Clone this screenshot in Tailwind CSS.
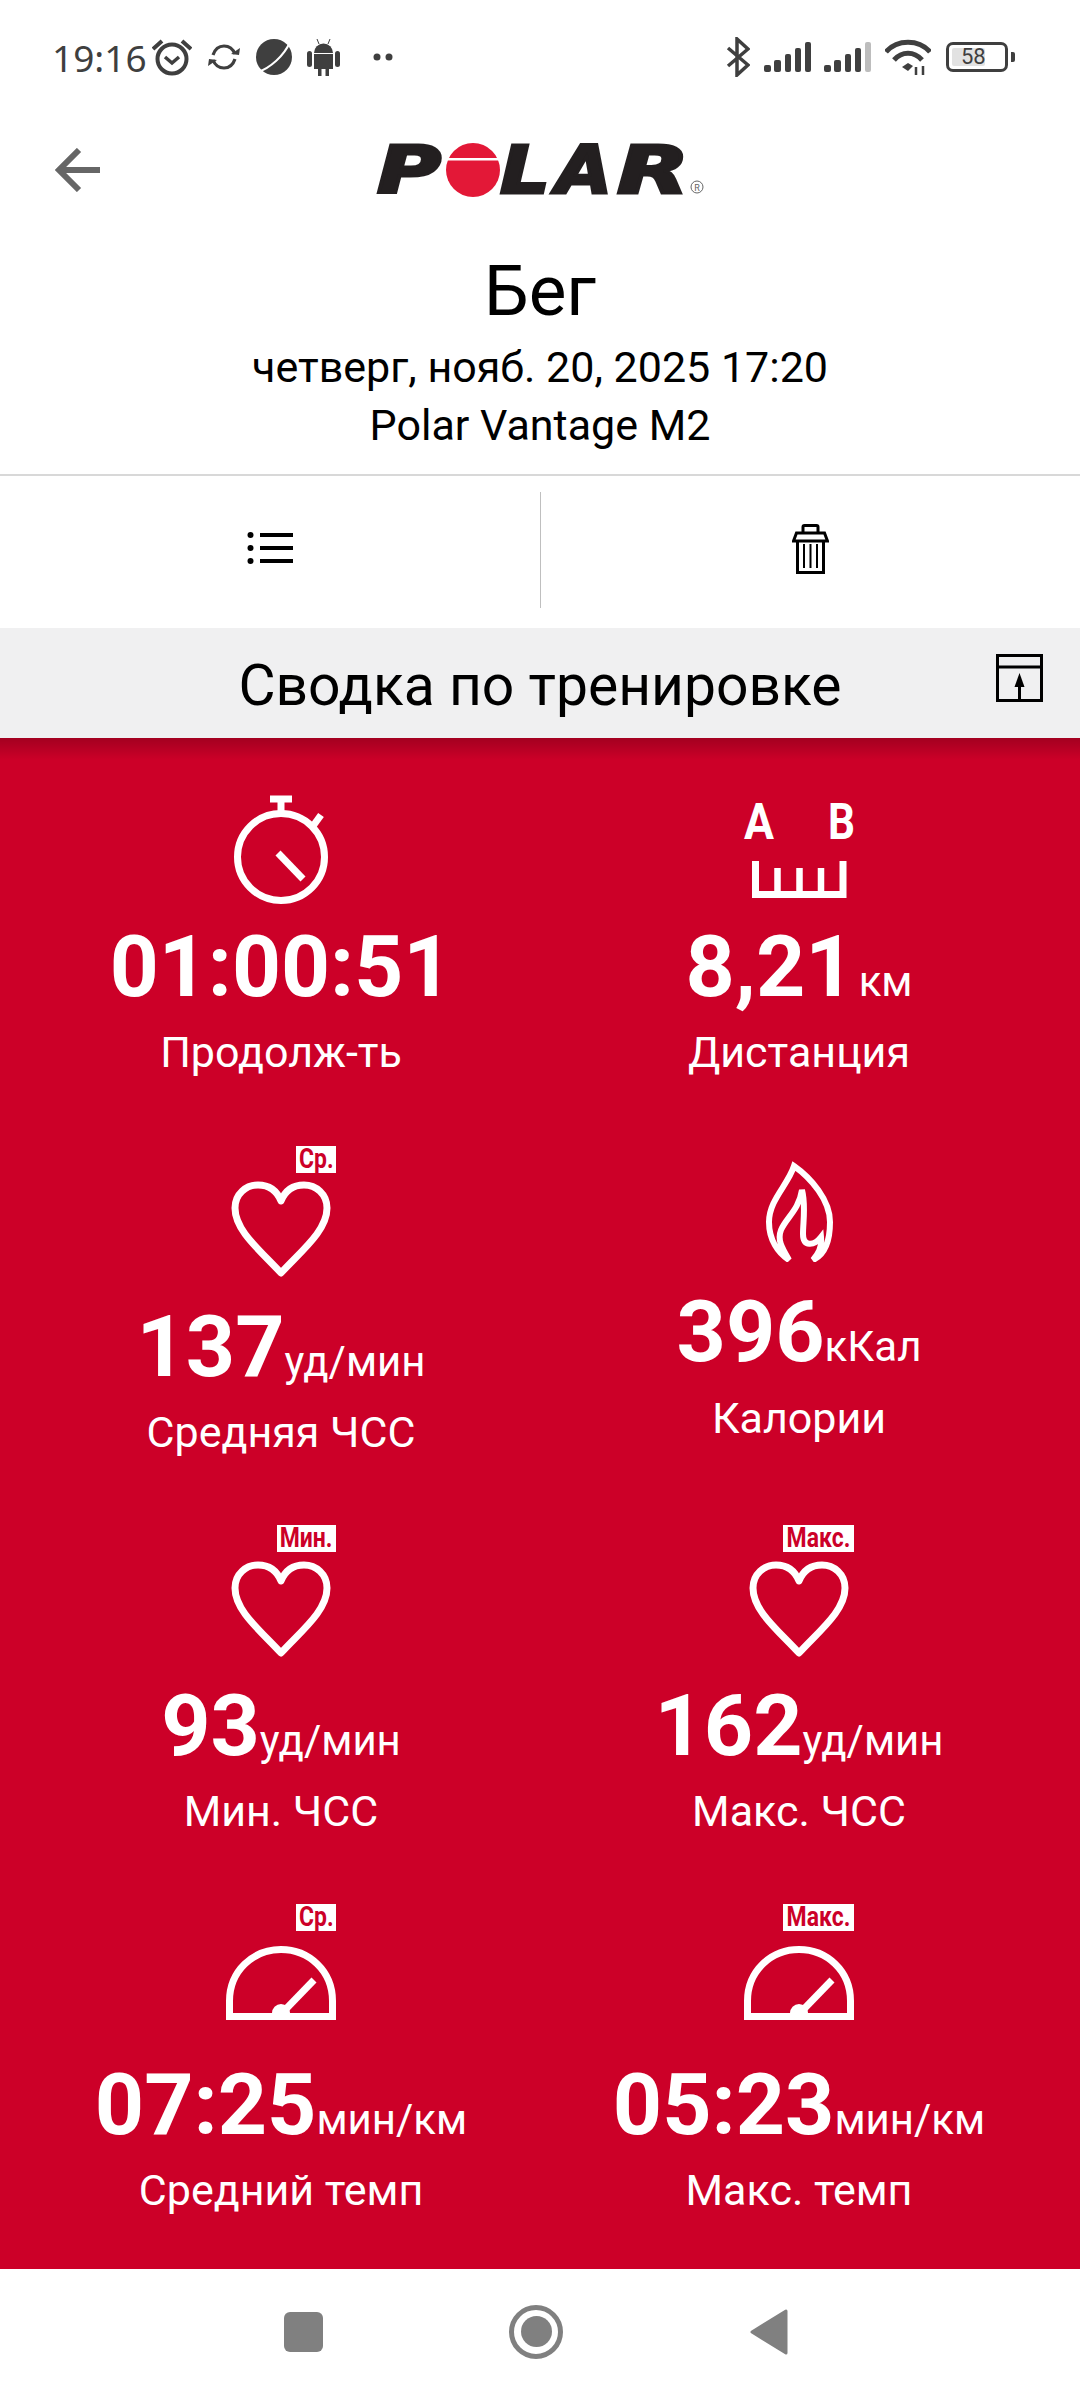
<!DOCTYPE html>
<html lang="ru">

<head>
    <meta charset="UTF-8">
    <meta name="viewport" content="width=device-width, initial-scale=1.0">
    <script src="https://cdn.jsdelivr.net/npm/@tailwindcss/browser@4"></script>
    <title>Polar</title>
</head>

<body class="bg-white font-['Roboto',sans-serif] text-black">
    <svg class="hidden">
        <symbol id="heart" viewBox="0 0 100 97">
            <path d="M50 92C30 70 4 50 4 27 4 13 15 4 27 4 38 4 46 10 50 20 54 10 62 4 73 4 85 4 96 13 96 27 96 50 70 70 50 92Z" fill="none" stroke="#fff" stroke-width="7" stroke-linejoin="round" />
        </symbol>
        <symbol id="gauge" viewBox="0 0 110 74">
            <path d="M3.500 70.500V55C3.500 25 27 3.500 55 3.500S106.500 25 106.500 55V70.500Z" fill="none" stroke="#fff" stroke-width="7" />
            <path d="M57 66L88 34" stroke="#fff" stroke-width="7" />
            <path d="M46 67A9 9 0 0 1 64 67Z" fill="#fff" />
        </symbol>
    </svg>

    <div class="flex h-[2400px] w-[1080px] flex-col overflow-hidden">
        <!-- status bar -->
        <div class="flex h-[114px] shrink-0 items-center pl-[52px] pr-[65px] text-[#3f3f3f]">
            <span class="w-[93px] font-['Noto_Sans',sans-serif] text-[37px] leading-none">19:16</span>
            <svg class="ml-[7px]" width="40" height="38" viewBox="0 0 40 38" fill="none" stroke="#3f3f3f">
                <circle cx="20" cy="21" r="14.500" stroke-width="4" />
                <path d="M13 19l7 6 7-6" stroke-width="3.500" />
                <path d="M1 11L10 3M39 11L30 3" stroke-width="4" />
            </svg>
            <svg class="ml-[16px]" width="32" height="28" viewBox="0 0 32 28" fill="none" stroke="#3f3f3f" stroke-width="3.200">
                <path d="M5 12C7 6 11 3 16 3c5 0 9 3 11 8" />
                <path d="M27 16c-2 6-6 9-11 9-5 0-9-3-11-8" />
                <path d="M23 11l8 1 1-7z" fill="#3f3f3f" stroke="none" />
                <path d="M9 17l-8-1-1 7z" fill="#3f3f3f" stroke="none" />
            </svg>
            <svg class="ml-[16px]" width="36" height="36" viewBox="0 0 36 36">
                <circle cx="18" cy="18" r="18" fill="#3f3f3f" />
                <path d="M2 33C14 29 28 17 34 3" fill="none" stroke="#fff" stroke-width="2" />
            </svg>
            <svg class="ml-[15px]" width="33" height="37" viewBox="0 0 33 37" fill="#3f3f3f">
                <path d="M7 14a9.500 9.500 0 0 1 19 0z" />
                <path d="M7 15h19v15h-4v7h-3.500v-7h-4v7H11v-7H7z" />
                <rect x="0" y="12" width="5" height="16" rx="2.500" />
                <rect x="28" y="12" width="5" height="16" rx="2.500" />
                <path d="M10 0l2 5M23 0l-2 5" stroke="#3f3f3f" stroke-width="1" />
            </svg>
            <svg class="ml-[33px]" width="20" height="8" viewBox="0 0 20 8" fill="#3f3f3f">
                <circle cx="4" cy="4" r="3.500" />
                <circle cx="16" cy="4" r="3.500" />
            </svg>

            <svg class="ml-auto" width="24" height="40" viewBox="0 0 24 40" fill="none" stroke="#3f3f3f" stroke-width="3.500">
                <path d="M2 11L22 28 11 38V2L22 12 2 29" />
            </svg>
            <svg class="ml-[14px]" width="48" height="30" viewBox="0 0 48 30" fill="#3f3f3f">
                <rect x="0" y="23" width="7" height="7" rx="2" />
                <rect x="10" y="18" width="7" height="12" rx="2" />
                <rect x="21" y="12" width="6" height="18" rx="2" />
                <rect x="31" y="6" width="6" height="24" rx="2" />
                <rect x="41" y="0" width="6" height="30" rx="2" />
            </svg>
            <svg class="ml-[12px]" width="48" height="30" viewBox="0 0 48 30" fill="#3f3f3f">
                <rect x="0" y="23" width="7" height="7" rx="2" />
                <rect x="10" y="18" width="7" height="12" rx="2" />
                <rect x="21" y="12" width="6" height="18" rx="2" />
                <rect x="31" y="6" width="6" height="24" rx="2" />
                <rect x="41" y="0" width="6" height="30" rx="2" fill="#bdbdbd" />
            </svg>
            <svg class="ml-[13px]" width="46" height="36" viewBox="0 0 46 36" fill="none" stroke="#3f3f3f" stroke-width="5">
                <path d="M1 13C12 0 34 0 45 13" />
                <path d="M9 21C17 12 29 12 37 21" />
                <path d="M17 28l6-4 5 3-5 5z" fill="#3f3f3f" stroke="none" />
                <path d="M31 28v8M38 27v9" stroke-width="2.500" />
            </svg>
            <div class="ml-[15px] flex items-center">
                <div class="flex h-[30px] w-[62px] items-center rounded-[7px] border-[3px] border-[#3f3f3f] p-[3px]">
                    <div class="flex h-full w-[33px] items-center rounded-[2px] bg-[#e2e2e2]">
                        <span class="ml-[9px] text-[22px] leading-none text-[#3f3f3f]">58</span>
                    </div>
                </div>
                <div class="ml-[3px] h-[10px] w-[4px] rounded-r-[2px] bg-[#3f3f3f]"></div>
            </div>
        </div>

        <!-- header -->
        <div class="grid h-[112px] shrink-0 grid-cols-[1fr_328px_1fr] items-center">
            <svg class="ml-[55px]" width="45" height="44" viewBox="0 0 45 44" fill="none" stroke="#666" stroke-width="6">
                <path d="M45 22H4M24 2L4 22l20 20" />
            </svg>
            <svg class="mt-[8px] overflow-visible" width="328" height="60" viewBox="0 0 328 60">
                <g font-family="DejaVu Sans" font-weight="700" font-style="italic" font-size="66" fill="#231f20" stroke="#231f20" stroke-width="3">
                    <text x="1" y="49" textLength="64" lengthAdjust="spacingAndGlyphs">P</text>
                    <text x="124" y="49" textLength="50" lengthAdjust="spacingAndGlyphs">L</text>
                    <text x="180" y="49" textLength="56" lengthAdjust="spacingAndGlyphs">A</text>
                    <text x="241" y="49" textLength="72" lengthAdjust="spacingAndGlyphs">R</text>
                </g>
                <circle cx="97" cy="26" r="27" fill="#e31837" />
                <rect x="70" y="14" width="54" height="2.500" fill="#fff" />
                <circle cx="321" cy="43" r="6" fill="none" stroke="#666" stroke-width="1" />
                <text x="321" y="46.500" text-anchor="middle" font-family="Roboto" font-size="9" fill="#666">R</text>
            </svg>
        </div>

        <!-- title -->
        <div class="flex h-[250px] shrink-0 flex-col items-center border-b-2 border-[#d8d8d8] pt-[24px]">
            <div class="text-[71px] leading-[82px]">Бег</div>
            <div class="mt-[6px] text-[43px] leading-[58px]">четверг, нояб. 20, 2025 17:20</div>
            <div class="text-[43px] leading-[58px]">Polar Vantage M2</div>
        </div>

        <!-- actions -->
        <div class="flex h-[152px] shrink-0 items-center">
            <div class="flex flex-1 justify-center pb-[8px]">
                <svg width="46" height="32" viewBox="0 0 46 32" fill="#000">
                    <circle cx="3.500" cy="3" r="3" />
                    <circle cx="3.500" cy="16" r="3" />
                    <circle cx="3.500" cy="29" r="3" />
                    <rect x="13" y="1" width="33" height="4" />
                    <rect x="13" y="14" width="33" height="4" />
                    <rect x="13" y="27" width="33" height="4" />
                </svg>
            </div>
            <div class="mb-[4px] h-[116px] w-px bg-[#bfbfbf]"></div>
            <div class="flex flex-1 justify-center pb-[6px]">
                <svg width="37" height="50" viewBox="0 0 37 50" fill="none" stroke="#000" stroke-width="3">
                    <path d="M11 9V3q0-1.500 1.500-1.500h12Q26 1.500 26 3v6" />
                    <path d="M1.500 17l3-8h28l3 8z" />
                    <path d="M5.500 16v32.500h26V16" />
                    <path d="M12 20v24M18.500 20v24M25 20v24" stroke-width="2" />
                </svg>
            </div>
        </div>

        <!-- section title -->
        <div class="grid h-[110px] shrink-0 grid-cols-[1fr_auto_1fr] items-center bg-[#f0f0f1]">
            <div></div>
            <div class="pt-[5px] text-[57px] leading-none">Сводка по тренировке</div>
            <svg class="mb-[10px] mr-[37px] justify-self-end" width="47" height="48" viewBox="0 0 47 48" fill="none" stroke="#000" stroke-width="3">
                <rect x="1.500" y="1.500" width="44" height="45" />
                <path d="M1 13h45" />
                <path d="M23.500 30v17" />
                <path d="M23.500 19l5 14h-10z" fill="#000" stroke="none" />
            </svg>
        </div>

        <!-- summary -->
        <div class="relative grid flex-1 grid-cols-2 content-start bg-[#cc0028] px-[22px] pt-[57px] text-white">
            <div class="absolute inset-x-0 top-0 h-[22px] bg-gradient-to-b from-black/20 to-transparent"></div>

            <div class="flex h-[351px] flex-col items-center">
                <svg width="94" height="109" viewBox="0 0 94 109" fill="none" stroke="#fff" stroke-width="7">
                    <circle cx="47" cy="62" r="43.500" />
                    <path d="M36 4h22M47 4v14" />
                    <path d="M79 31l8-11" />
                    <path d="M44 58l25 26" />
                </svg>
                <div class="mt-[13px] h-[100px] text-[85.500px] font-bold leading-[100px]">01:00:51</div>
                <div class="mt-[10px] text-[43px] leading-[50px]">Продолж-ть</div>
            </div>
            <div class="flex h-[351px] flex-col items-center">
                <svg class="overflow-visible" width="112" height="109" viewBox="0 0 112 109">
                    <text x="1" y="44" font-family="Roboto" font-weight="700" font-size="50" textLength="30" lengthAdjust="spacingAndGlyphs" fill="#fff">A</text>
                    <text x="85" y="44" font-family="Roboto" font-weight="700" font-size="50" textLength="27" lengthAdjust="spacingAndGlyphs" fill="#fff">B</text>
                    <path d="M12.500 66v33.500h87.500V66" fill="none" stroke="#fff" stroke-width="7" />
                    <path d="M34.500 73v26M56.500 73v26M78 73v26" fill="none" stroke="#fff" stroke-width="6.500" />
                </svg>
                <div class="mt-[13px] h-[100px] leading-[100px]"><span class="text-[86px] font-bold">8,21</span><span class="ml-[4px] text-[42px]">км</span></div>
                <div class="mt-[10px] text-[43px] leading-[50px]">Дистанция</div>
            </div>

            <div class="flex h-[379px] flex-col items-center">
                <div class="relative pt-[35px]">
                    <div class="absolute right-[-5px] top-0 flex h-[27px] w-[40px] items-center justify-center bg-white">
                        <span class="scale-x-85 text-[27px] font-bold leading-none text-[#cc0028]">Ср.</span>
                    </div>
                    <svg class="h-[97px] w-[100px]"><use href="#heart" /></svg>
                </div>
                <div class="mt-[19px] h-[100px] leading-[100px]"><span class="text-[86px] font-bold">137</span><span class="text-[42px]">уд/мин</span></div>
                <div class="mt-[10px] text-[43px] leading-[50px]">Средняя ЧСС</div>
            </div>
            <div class="flex h-[379px] flex-col items-center pt-[14px]">
                <svg width="67" height="102" viewBox="0 0 67 102" fill="none" stroke="#fff" stroke-width="6">
                    <path d="M28 6C22 25 3 40 3 62 3 80 12 93 23 100 16 88 11 80 15 70 20 58 33 50 36 30 40 45 37 62 37 74 37 87 48 86 55 77 56 88 52 94 47 100 58 95 64 82 64 62 64 40 45 18 28 6Z" />
                </svg>
                <div class="mt-[20px] h-[100px] leading-[100px]"><span class="text-[86px] font-bold">396</span><span class="text-[42px]">кКал</span></div>
                <div class="mt-[11px] text-[43px] leading-[50px]">Калории</div>
            </div>

            <div class="flex h-[379px] flex-col items-center">
                <div class="relative pt-[36px]">
                    <div class="absolute right-[-5px] top-0 flex h-[27px] w-[59px] items-center justify-center bg-white">
                        <span class="scale-x-85 text-[27px] font-bold leading-none text-[#cc0028]">Мин.</span>
                    </div>
                    <svg class="h-[97px] w-[100px]"><use href="#heart" /></svg>
                </div>
                <div class="mt-[18px] h-[100px] leading-[100px]"><span class="text-[86px] font-bold">93</span><span class="text-[42px]">уд/мин</span></div>
                <div class="mt-[10px] text-[43px] leading-[50px]">Мин. ЧСС</div>
            </div>
            <div class="flex h-[379px] flex-col items-center">
                <div class="relative pt-[36px]">
                    <div class="absolute right-[-5px] top-0 flex h-[27px] w-[71px] items-center justify-center bg-white">
                        <span class="scale-x-85 text-[27px] font-bold leading-none text-[#cc0028]">Макс.</span>
                    </div>
                    <svg class="h-[97px] w-[100px]"><use href="#heart" /></svg>
                </div>
                <div class="mt-[18px] h-[100px] leading-[100px]"><span class="text-[86px] font-bold">162</span><span class="text-[42px]">уд/мин</span></div>
                <div class="mt-[10px] text-[43px] leading-[50px]">Макс. ЧСС</div>
            </div>

            <div class="flex flex-col items-center">
                <div class="relative pt-[42px]">
                    <div class="absolute right-0 top-0 flex h-[27px] w-[40px] items-center justify-center bg-white">
                        <span class="scale-x-85 text-[27px] font-bold leading-none text-[#cc0028]">Ср.</span>
                    </div>
                    <svg class="h-[74px] w-[110px]"><use href="#gauge" /></svg>
                </div>
                <div class="mt-[35px] h-[100px] leading-[100px]"><span class="text-[86px] font-bold">07:25</span><span class="text-[42px]">мин/км</span></div>
                <div class="mt-[10px] text-[43px] leading-[50px]">Средний темп</div>
            </div>
            <div class="flex flex-col items-center">
                <div class="relative pt-[42px]">
                    <div class="absolute right-0 top-0 flex h-[27px] w-[71px] items-center justify-center bg-white">
                        <span class="scale-x-85 text-[27px] font-bold leading-none text-[#cc0028]">Макс.</span>
                    </div>
                    <svg class="h-[74px] w-[110px]"><use href="#gauge" /></svg>
                </div>
                <div class="mt-[35px] h-[100px] leading-[100px]"><span class="text-[86px] font-bold">05:23</span><span class="text-[42px]">мин/км</span></div>
                <div class="mt-[10px] text-[43px] leading-[50px]">Макс. темп</div>
            </div>
        </div>

        <!-- nav bar -->
        <div class="flex h-[131px] shrink-0 items-center bg-white pb-[6px]">
            <div class="ml-[284px] h-[40px] w-[39px] rounded-[6px] bg-[#808080]"></div>
            <div class="ml-[186px] flex h-[54px] w-[54px] items-center justify-center rounded-full border-[5px] border-[#808080]">
                <div class="h-[31px] w-[31px] rounded-full bg-[#808080]"></div>
            </div>
            <svg class="ml-[187px]" width="38" height="46" viewBox="0 0 38 46" fill="#808080" stroke="#808080" stroke-width="3" stroke-linejoin="round">
                <path d="M36 2V44L2 23Z" />
            </svg>
        </div>
    </div>
</body>

</html>
